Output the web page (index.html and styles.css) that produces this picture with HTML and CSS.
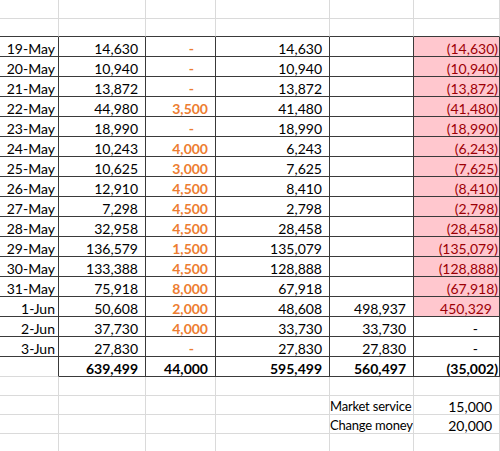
FILE: index.html
```html
<!DOCTYPE html>
<html lang="en">
<head>
    <meta charset="UTF-8">
    <title>Daily balance</title>
    <link rel="stylesheet" href="styles.css">
</head>
<body>
    <div class="sheet">
        <!-- empty rows above the table -->
        <div class="row head1">
            <div class="cell"></div><div class="cell"></div><div class="cell"></div>
            <div class="cell"></div><div class="cell"></div><div class="cell"></div>
        </div>
        <div class="row head2">
            <div class="cell"></div><div class="cell"></div><div class="cell"></div>
            <div class="cell"></div><div class="cell"></div><div class="cell"></div>
        </div>

        <div class="row box">
            <div class="cell date">19-May</div><div class="cell num">14,630</div><div class="cell dash fee">-</div>
            <div class="cell num">14,630</div><div class="cell"></div><div class="cell neg bad">(14,630)</div>
        </div>
        <div class="row box">
            <div class="cell date">20-May</div><div class="cell num">10,940</div><div class="cell dash fee">-</div>
            <div class="cell num">10,940</div><div class="cell"></div><div class="cell neg bad">(10,940)</div>
        </div>
        <div class="row box">
            <div class="cell date">21-May</div><div class="cell num">13,872</div><div class="cell dash fee">-</div>
            <div class="cell num">13,872</div><div class="cell"></div><div class="cell neg bad">(13,872)</div>
        </div>
        <div class="row box">
            <div class="cell date">22-May</div><div class="cell num">44,980</div><div class="cell num fee">3,500</div>
            <div class="cell num">41,480</div><div class="cell"></div><div class="cell neg bad">(41,480)</div>
        </div>
        <div class="row box">
            <div class="cell date">23-May</div><div class="cell num">18,990</div><div class="cell dash fee">-</div>
            <div class="cell num">18,990</div><div class="cell"></div><div class="cell neg bad">(18,990)</div>
        </div>
        <div class="row box">
            <div class="cell date">24-May</div><div class="cell num">10,243</div><div class="cell num fee">4,000</div>
            <div class="cell num">6,243</div><div class="cell"></div><div class="cell neg bad">(6,243)</div>
        </div>
        <div class="row box">
            <div class="cell date">25-May</div><div class="cell num">10,625</div><div class="cell num fee">3,000</div>
            <div class="cell num">7,625</div><div class="cell"></div><div class="cell neg bad">(7,625)</div>
        </div>
        <div class="row box">
            <div class="cell date">26-May</div><div class="cell num">12,910</div><div class="cell num fee">4,500</div>
            <div class="cell num">8,410</div><div class="cell"></div><div class="cell neg bad">(8,410)</div>
        </div>
        <div class="row box">
            <div class="cell date">27-May</div><div class="cell num">7,298</div><div class="cell num fee">4,500</div>
            <div class="cell num">2,798</div><div class="cell"></div><div class="cell neg bad">(2,798)</div>
        </div>
        <div class="row box">
            <div class="cell date">28-May</div><div class="cell num">32,958</div><div class="cell num fee">4,500</div>
            <div class="cell num">28,458</div><div class="cell"></div><div class="cell neg bad">(28,458)</div>
        </div>
        <div class="row box">
            <div class="cell date">29-May</div><div class="cell num">136,579</div><div class="cell num fee">1,500</div>
            <div class="cell num">135,079</div><div class="cell"></div><div class="cell neg bad">(135,079)</div>
        </div>
        <div class="row box">
            <div class="cell date">30-May</div><div class="cell num">133,388</div><div class="cell num fee">4,500</div>
            <div class="cell num">128,888</div><div class="cell"></div><div class="cell neg bad">(128,888)</div>
        </div>
        <div class="row box">
            <div class="cell date">31-May</div><div class="cell num">75,918</div><div class="cell num fee">8,000</div>
            <div class="cell num">67,918</div><div class="cell"></div><div class="cell neg bad">(67,918)</div>
        </div>
        <div class="row box">
            <div class="cell date">1-Jun</div><div class="cell num">50,608</div><div class="cell num fee">2,000</div>
            <div class="cell num">48,608</div><div class="cell num">498,937</div><div class="cell num bad">450,329</div>
        </div>
        <div class="row box">
            <div class="cell date">2-Jun</div><div class="cell num">37,730</div><div class="cell num fee">4,000</div>
            <div class="cell num">33,730</div><div class="cell num">33,730</div><div class="cell dash">-</div>
        </div>
        <div class="row box">
            <div class="cell date">3-Jun</div><div class="cell num">27,830</div><div class="cell dash fee">-</div>
            <div class="cell num">27,830</div><div class="cell num">27,830</div><div class="cell dash">-</div>
        </div>

        <!-- totals -->
        <div class="row box total">
            <div class="cell"></div><div class="cell num">639,499</div><div class="cell num">44,000</div>
            <div class="cell num">595,499</div><div class="cell num">560,497</div><div class="cell neg">(35,002)</div>
        </div>

        <div class="row low">
            <div class="cell"></div><div class="cell"></div><div class="cell"></div>
            <div class="cell"></div><div class="cell"></div><div class="cell"></div>
        </div>
        <div class="row low">
            <div class="cell"></div><div class="cell"></div><div class="cell"></div>
            <div class="cell"></div><div class="cell label">Market service</div><div class="cell num">15,000</div>
        </div>
        <div class="row low">
            <div class="cell"></div><div class="cell"></div><div class="cell"></div>
            <div class="cell"></div><div class="cell label">Change money</div><div class="cell num">20,000</div>
        </div>
        <div class="row low">
            <div class="cell"></div><div class="cell"></div><div class="cell"></div>
            <div class="cell"></div><div class="cell"></div><div class="cell"></div>
        </div>
    </div>
</body>
</html>
```

FILE: styles.css
```css
body {
    margin: 0;
    background: #fff;
    color: #000;
    font-family: Lato, "Liberation Sans", sans-serif;
    font-size: 14px;
}
.sheet {
    width: 500px;
    overflow: hidden;
}
.row {
    display: grid;
    grid-template-columns: 59px 87px 70px 114px 84px 86px;
    height: 20px;
}
.head1 { height: 19px; }
.head2 { height: 18px; }
.low { height: 19px; }
.cell {
    box-sizing: border-box;
    display: flex;
    align-items: flex-end;
    justify-content: flex-end;
    border-right: 1px solid #dadada;
    border-bottom: 1px solid #dadada;
    line-height: 15px;
    white-space: nowrap;
    overflow: hidden;
}
.head2 .cell {
    border-bottom-color: #3a3a3a;
}
.box .cell {
    border-color: #3a3a3a;
}
.total .cell {
    font-weight: 700;
}
.total .cell:first-child {
    border-bottom-color: #dadada;
}
.date {
    padding-right: 3px;
}
.num {
    padding-right: 7px;
}
.neg {
    padding-right: 1px;
}
.dash {
    padding-right: 21px;
}
.label {
    justify-content: flex-start;
    padding-left: 0;
    font-size: 13px;
    letter-spacing: -0.2px;
}
.fee {
    color: #ed7d31;
    font-weight: 700;
}
.bad {
    background-color: #ffc7ce;
    color: #9c0006;
}
```
